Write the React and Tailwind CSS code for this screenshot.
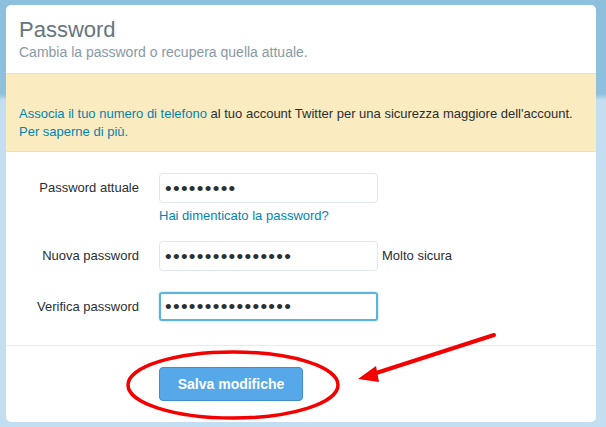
export default function App() {
  const dots = (n) => '•'.repeat(n);

  return (
    <div
      className="w-[606px] h-[427px] overflow-hidden pt-[5px] pl-[6px] bg-[linear-gradient(to_bottom,#8cc0dc_0px,#8cc0dc_94px,#c2def0_100px,#c2def0_100%)]"
      style={{ fontFamily: '"Liberation Sans", Arial, sans-serif' }}
    >
      <div className="relative w-[590px] h-[417px] bg-white rounded-[5px] flex flex-col">
        {/* Header */}
        <div className="h-[68px] px-[13px] pt-[12px]">
          <h1 className="text-[22px] leading-[26px] text-[#66757f]">Password</h1>
          <p className="text-[14px] leading-[18px] text-[#8899a6]">Cambia la password o recupera quella attuale.</p>
        </div>

        {/* Notice */}
        <div className="h-[79px] bg-[#fbebc0] border-y border-[#f3e0b0] px-[13px] pt-[31px] text-[13px] leading-[18px] text-[#292f33]">
          <p>
            <span className="text-[#0084b4]">Associa il tuo numero di telefono</span> al tuo account Twitter per una sicurezza maggiore dell'account.
          </p>
          <p className="text-[#0084b4]">Per saperne di più.</p>
        </div>

        {/* Form */}
        <div className="h-[194px] border-b border-[#e6ecf0] pt-[21px] text-[13px] text-[#292f33]">
          <div className="flex items-center gap-[20px]">
            <label className="w-[133px] text-right">Password attuale</label>
            <div className="w-[219px] h-[30px] border border-[#e1e8ed] rounded-[4px] flex items-center px-[5px]">
              <span className="text-[19px] tracking-[1.3px] leading-none text-[#292f33]">{dots(9)}</span>
            </div>
          </div>
          <div className="pl-[153px] mt-[5px] h-[16px] leading-[16px] text-[#0084b4]">Hai dimenticato la password?</div>

          <div className="flex items-center gap-[20px] mt-[17px]">
            <label className="w-[133px] text-right">Nuova password</label>
            <div className="w-[219px] h-[30px] border border-[#e1e8ed] rounded-[4px] flex items-center px-[5px]">
              <span className="text-[19px] tracking-[1.3px] leading-none text-[#292f33]">{dots(16)}</span>
            </div>
            <span className="-ml-[16px]">Molto sicura</span>
          </div>

          <div className="flex items-center gap-[20px] mt-[21px]">
            <label className="w-[133px] text-right">Verifica password</label>
            <div className="w-[219px] h-[29px] border-2 border-[#5cb3dc] rounded-[3px] flex items-center px-[4px] shadow-[0_0_2px_#8ccbe8]">
              <span className="text-[19px] tracking-[1.3px] leading-none text-[#292f33]">{dots(16)}</span>
            </div>
          </div>
        </div>

        {/* Footer */}
        <div className="pt-[21px] pl-[153px]">
          <button className="w-[144px] h-[34px] rounded-[4px] bg-[#56a8e8] border border-[#3f8fcf] text-white font-bold text-[14px]">
            Salva modifiche
          </button>
        </div>

        {/* Annotation overlay */}
        <svg className="absolute left-0 top-0 pointer-events-none" width="590" height="417" viewBox="0 0 590 417">
          <ellipse cx="227" cy="380" rx="105" ry="33" fill="none" stroke="#f40000" strokeWidth="3.5" />
          <line x1="488" y1="330" x2="364" y2="370" stroke="#f40000" strokeWidth="4" strokeLinecap="round" />
          <polygon points="352,374 370,361 373,377" fill="#f40000" />
        </svg>
      </div>
    </div>
  );
}
